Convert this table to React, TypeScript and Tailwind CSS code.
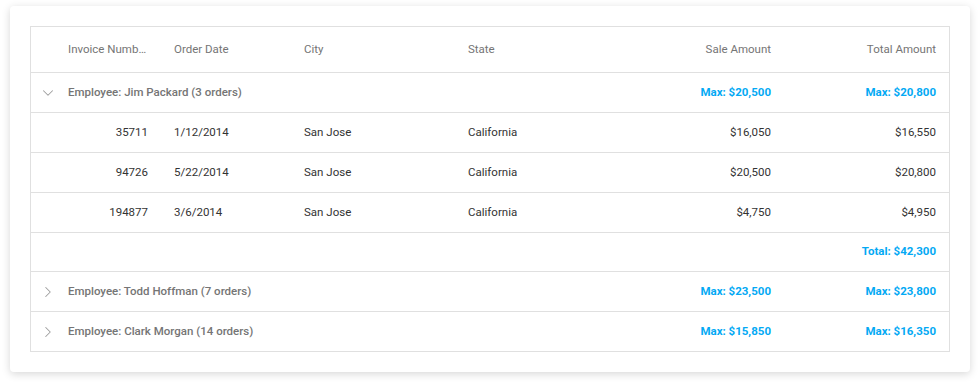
import { ChevronDown, ChevronRight } from "lucide-react";

interface Order {
  invoice: number;
  date: string;
  city: string;
  state: string;
  sale: string;
  total: string;
}

interface Group {
  name: string;
  count: number;
  maxSale: string;
  maxTotal: string;
  expanded: boolean;
  orders: Order[];
  footer?: string;
}

const groups: Group[] = [
  {
    name: "Jim Packard",
    count: 3,
    maxSale: "$20,500",
    maxTotal: "$20,800",
    expanded: true,
    footer: "$42,300",
    orders: [
      { invoice: 35711, date: "1/12/2014", city: "San Jose", state: "California", sale: "$16,050", total: "$16,550" },
      { invoice: 94726, date: "5/22/2014", city: "San Jose", state: "California", sale: "$20,500", total: "$20,800" },
      { invoice: 194877, date: "3/6/2014", city: "San Jose", state: "California", sale: "$4,750", total: "$4,950" },
    ],
  },
  { name: "Todd Hoffman", count: 7, maxSale: "$23,500", maxTotal: "$23,800", expanded: false, orders: [] },
  { name: "Clark Morgan", count: 14, maxSale: "$15,850", maxTotal: "$16,350", expanded: false, orders: [] },
];

const cols = "grid grid-cols-[24px_106px_130px_164px_1fr_165px_165px]";

export default function App() {
  return (
    <div className="bg-white w-[980px] h-[386px] pt-[6px] px-[10px] font-['Roboto',sans-serif] text-[11.5px]">
      <div className="bg-white rounded-[4px] shadow-[0_2px_8px_rgba(0,0,0,0.16)] p-5">
        <div className="border border-[#e0e0e0]">
          {/* header */}
          <div className={`${cols} h-[46px] items-center text-[#757575] border-b border-[#e0e0e0]`}>
            <div />
            <div className="px-[13px] truncate">Invoice Number</div>
            <div className="px-[13px]">Order Date</div>
            <div className="px-[13px]">City</div>
            <div className="px-[13px]">State</div>
            <div className="px-[13px] text-right">Sale Amount</div>
            <div className="px-[13px] text-right">Total Amount</div>
          </div>

          {groups.map((g, gi) => {
            const last = gi === groups.length - 1 && !g.expanded;
            return (
              <div key={g.name}>
                <div
                  className={`${cols} items-center ${last ? "h-[39px]" : "h-[40px] border-b border-[#e0e0e0]"}`}
                >
                  <div className="flex justify-end -mr-[2px] text-[#9e9e9e]">
                    {g.expanded ? (
                      <ChevronDown size={18} strokeWidth={1.4} />
                    ) : (
                      <ChevronRight size={18} strokeWidth={1.4} />
                    )}
                  </div>
                  <div className="col-span-4 px-[13px] font-medium text-[#757575] whitespace-nowrap">
                    Employee: {g.name} ({g.count} orders)
                  </div>
                  <div className="px-[13px] text-right font-bold text-[#03a9f4]">Max: {g.maxSale}</div>
                  <div className="px-[13px] text-right font-bold text-[#03a9f4]">Max: {g.maxTotal}</div>
                </div>

                {g.orders.map((o) => (
                  <div key={o.invoice} className={`${cols} h-[40px] items-center text-[#333333] border-b border-[#e0e0e0]`}>
                    <div />
                    <div className="px-[13px] text-right">{o.invoice}</div>
                    <div className="px-[13px]">{o.date}</div>
                    <div className="px-[13px]">{o.city}</div>
                    <div className="px-[13px]">{o.state}</div>
                    <div className="px-[13px] text-right">{o.sale}</div>
                    <div className="px-[13px] text-right">{o.total}</div>
                  </div>
                ))}

                {g.footer && (
                  <div className={`${cols} h-[39px] items-center border-b border-[#e0e0e0]`}>
                    <div className="col-span-6" />
                    <div className="px-[13px] text-right font-bold text-[#03a9f4]">Total: {g.footer}</div>
                  </div>
                )}
              </div>
            );
          })}
        </div>
      </div>
    </div>
  );
}
